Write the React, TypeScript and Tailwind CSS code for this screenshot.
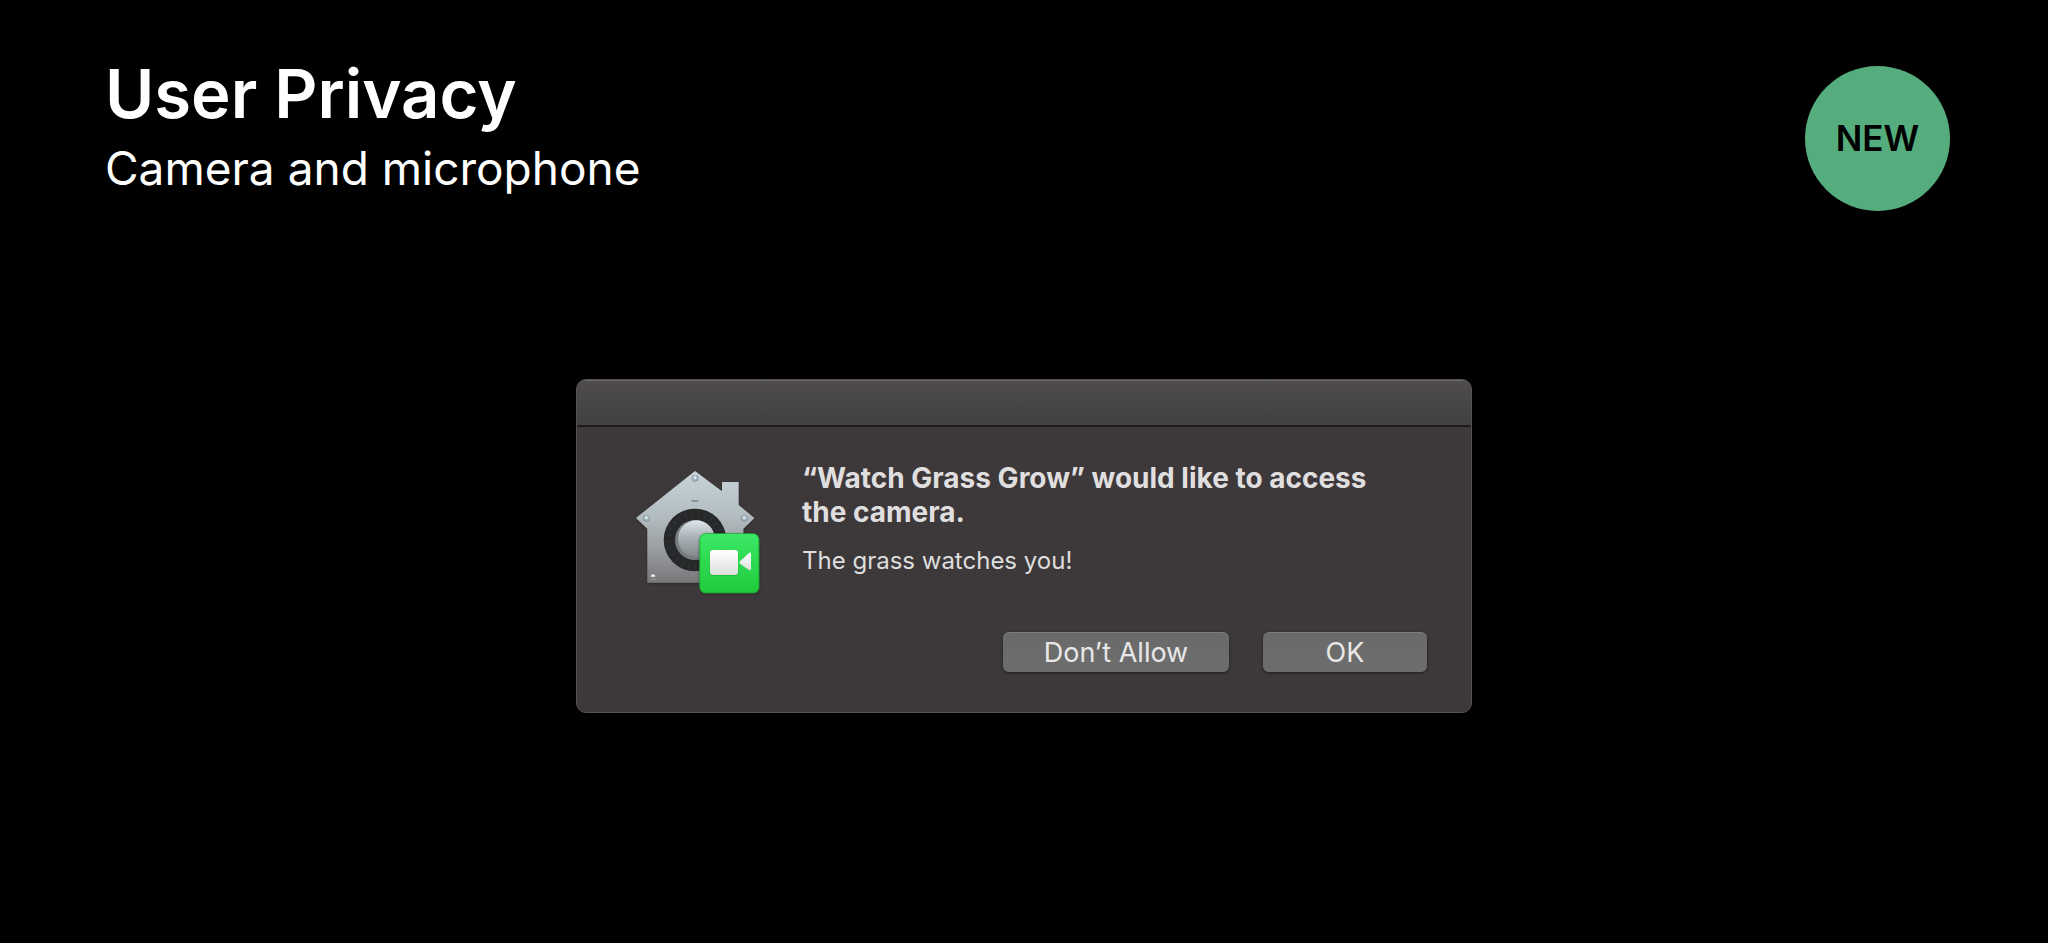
type DialogButtonProps = {
  label: string
  className: string
}

const DialogButton = ({ label, className }: DialogButtonProps) => (
  <button
    type="button"
    className={`h-10 rounded-md border-t border-[#7c7c7c] bg-linear-to-b from-[#6a6a6a] to-[#6d6d6d] text-[27px] leading-9 text-[#e8e8e8] shadow-[0_1px_3px_rgba(0,0,0,0.5)] ${className}`}
  >
    {label}
  </button>
)

const screws = [
  { x: 210, y: 55 },
  { x: 64, y: 175 },
  { x: 358, y: 175 },
]

const HouseIcon = () => (
  <svg viewBox="21 24 390 390" className="size-[130px] shrink-0" aria-hidden="true">
    <defs>
      <linearGradient id="house" x1="0" y1="0" x2="0" y2="1">
        <stop offset="0" stopColor="#c6d3d8" />
        <stop offset="0.4" stopColor="#b3bdc1" />
        <stop offset="0.7" stopColor="#9a9d9f" />
        <stop offset="1" stopColor="#77777a" />
      </linearGradient>
      <linearGradient id="knob" x1="0" y1="0" x2="0" y2="1">
        <stop offset="0" stopColor="#dfe7eb" />
        <stop offset="0.4" stopColor="#afb8bd" />
        <stop offset="1" stopColor="#828689" />
      </linearGradient>
      <linearGradient id="badge" x1="0" y1="0" x2="0" y2="1">
        <stop offset="0" stopColor="#3be765" />
        <stop offset="1" stopColor="#20cc3b" />
      </linearGradient>
      <linearGradient id="lens" x1="0" y1="0" x2="0" y2="1">
        <stop offset="0" stopColor="#ffffff" />
        <stop offset="1" stopColor="#dcdfdc" />
      </linearGradient>
      <filter id="drop" x="-10%" y="-10%" width="120%" height="120%">
        <feDropShadow dx="0" dy="3" stdDeviation="4" floodColor="#000" floodOpacity="0.35" />
      </filter>
    </defs>

    <path
      d="M210 33 L291 94 V66 H341 V135 L388 174 L355 206 V368 H67 V206 L33 174 Z"
      fill="url(#house)"
      filter="url(#drop)"
    />
    {screws.map((screw) => (
      <g key={screw.x}>
        <circle cx={screw.x} cy={screw.y} r="10" fill="#7f8b93" />
        <circle cx={screw.x} cy={screw.y - 1} r="8" fill="#a9b9c3" />
        <circle cx={screw.x} cy={screw.y - 2} r="4" fill="#e2ebf0" />
      </g>
    ))}
    <path d="M77 350 a7 7 0 0 1 14 0 Z" fill="#eceeee" />
    <path d="M75 359 H93" stroke="#909294" strokeWidth="3" />
    <path d="M197 121 H222 L217 125 H202 Z" fill="#7b858b" />

    <circle cx="210" cy="240" r="94" fill="#26282a" />
    <circle
      cx="210"
      cy="240"
      r="79"
      fill="none"
      stroke="#333537"
      strokeWidth="16"
      strokeDasharray="3 17"
    />
    <circle cx="210" cy="240" r="60" fill="#777c80" />
    <circle cx="214" cy="236" r="55" fill="url(#knob)" />

    <rect x="223" y="220" width="180" height="180" rx="19" fill="#1cb236" filter="url(#drop)" />
    <rect x="226" y="222" width="174" height="174" rx="16" fill="url(#badge)" />
    <rect x="254" y="272" width="86" height="76" rx="10" fill="#15a82f" opacity="0.5" />
    <rect x="255" y="270" width="84" height="75" rx="9" fill="url(#lens)" />
    <path
      d="M345 304 L372 279 Q378 275 378 282 V327 Q378 334 372 330 L345 311 Q342 307 345 304 Z"
      fill="url(#lens)"
    />
  </svg>
)

const PermissionDialog = () => (
  <section
    role="dialog"
    aria-labelledby="dialog-title"
    aria-describedby="dialog-message"
    className="w-full max-w-[896px] overflow-hidden rounded-[10px] border border-[#555354] bg-[#3d393a]"
  >
    <div className="h-[47px] border-b-2 border-[#1c1b1b] bg-linear-to-b from-[#504c4d] to-[#404040] shadow-[inset_0_1px_0_#6a6667]" />
    <div className="pt-[34px] pr-11 pb-10 pl-[55px]">
      <div className="flex items-start gap-10">
        <div className="pt-[7px]">
          <HouseIcon />
        </div>
        <div>
          <h2
            id="dialog-title"
            className="max-w-[600px] text-[28px] leading-[34px] font-bold text-[#e0dfdf]"
          >
            “Watch Grass Grow” would like to access the camera.
          </h2>
          <p id="dialog-message" className="mt-4 text-2xl leading-8 text-[#dfdede]">
            The grass watches you!
          </p>
        </div>
      </div>
      <div className="mt-[34px] flex justify-end gap-[34px]">
        <DialogButton label="Don’t Allow" className="w-[226px]" />
        <DialogButton label="OK" className="w-[164px]" />
      </div>
    </div>
  </section>
)

export default function App() {
  return (
    <div className="min-h-screen bg-black font-['Inter',sans-serif] text-white">
      <header className="flex items-start justify-between pt-[66px] pr-[98px] pl-[105px]">
        <div>
          <h1 className="text-[67px] leading-[56px] font-semibold">User Privacy</h1>
          <p className="mt-4 text-[46px] leading-[60px]">Camera and microphone</p>
        </div>
        <div className="flex size-[145px] items-center justify-center rounded-full bg-[#55ad7d] text-[35px] font-semibold text-black">
          NEW
        </div>
      </header>
      <main className="flex justify-center px-6 pt-[168px] pb-16">
        <PermissionDialog />
      </main>
    </div>
  )
}
